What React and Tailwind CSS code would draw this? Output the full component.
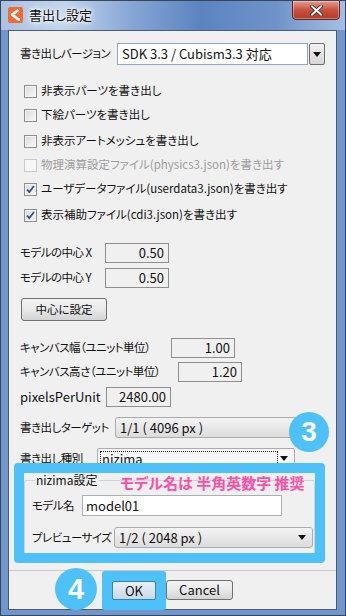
import React from "react";

const jp = "font-['Noto_Sans_CJK_JP','Noto_Sans',sans-serif] [font-feature-settings:'palt']";
const lbl = "shrink-0 whitespace-nowrap text-[11.5px] tracking-[-0.5px] text-[#111]";

function Arrow() {
  return (
    <svg width="8" height="5" viewBox="0 0 8 5">
      <path d="M0 0h8L4 5z" fill="#111" />
    </svg>
  );
}

function Check({ label, checked, disabled, extra = "" }) {
  return (
    <div className={`flex h-[24px] items-center ${extra}`}>
      <span
        className={`ml-[4px] flex h-[13px] w-[13px] shrink-0 items-center justify-center border ${
          disabled
            ? "border-[#cacaca] bg-[#f6f6f6]"
            : "border-[#8e8f8f] bg-gradient-to-br from-[#d9d9d9] to-[#fafafa] shadow-[inset_0_0_0_1px_#f4f4f4]"
        }`}
      >
        {checked ? (
          <svg width="9" height="9" viewBox="0 0 9 9">
            <path d="M1 4.5l2.3 2.6L8 1" fill="none" stroke="#3b4d7c" strokeWidth="1.8" />
          </svg>
        ) : null}
      </span>
      <span className={`ml-[4px] whitespace-nowrap text-[11.5px] ${disabled ? "text-[#9d9d9d]" : "text-[#111]"}`}>
        {label}
      </span>
    </div>
  );
}

function Num({ value, className }) {
  return (
    <div
      className={`flex h-[20px] shrink-0 items-center justify-end border border-[#8f8f8f] bg-[#f0f0f0] pr-[4px] text-[13px] text-[#111] ${className}`}
    >
      {value}
    </div>
  );
}

function Combo({ value, className }) {
  return (
    <div
      className={`flex h-[21px] shrink-0 items-center justify-between rounded-[3px] border border-[#acacac] bg-gradient-to-b from-[#f4f4f4] to-[#dcdcdc] pl-[4px] pr-[6px] text-[13px] text-[#111] ${className}`}
    >
      <span className="whitespace-pre">{value}</span>
      <Arrow />
    </div>
  );
}

export default function App() {
  return (
    <div className={`relative h-[616px] w-[346px] overflow-hidden border border-[#39465a] bg-[#7196cb] ${jp}`}>
      {/* title bar */}
      <div className="flex h-[29px] items-start bg-[linear-gradient(to_right,#a9c1e2_0%,#c3d5ec_18%,#86a6d5_38%,#5b84c0_58%,#6f93c9_80%,#a6bfe2_100%)]">
        <svg className="ml-[7px] mt-[6px]" width="15" height="16" viewBox="0 0 15 16">
          <rect width="15" height="16" rx="2" fill="#f06a35" />
          <path d="M10.5 3L4 7.6 10.5 12.5H12" fill="none" stroke="#fff" strokeWidth="2.6" strokeLinejoin="round" />
        </svg>
        <span className="ml-[6px] mt-[5px] whitespace-nowrap text-[13px] leading-[18px] text-[#111] [text-shadow:0_0_8px_#fff,0_0_5px_#fff,0_0_3px_#fff]">
          書出し設定
        </span>
        <div className="ml-auto mr-[5px] mt-[-1px] flex h-[20px] w-[48px] items-center justify-center rounded-b-[4px] border border-[#5b2a24] bg-gradient-to-b from-[#e29b8e] via-[#c9503e] to-[#b6382a] shadow-[inset_0_0_0_1px_rgba(255,255,255,0.35)]">
          <svg width="13" height="11" viewBox="0 0 13 11">
            <path d="M2 1.5l9 8M11 1.5l-9 8" stroke="#3d2522" strokeWidth="3.6" strokeLinecap="square" />
            <path d="M2 1.5l9 8M11 1.5l-9 8" stroke="#fff" strokeWidth="2" strokeLinecap="square" />
          </svg>
        </div>
      </div>

      {/* client */}
      <div className="relative ml-[7px] flex h-[580px] w-[329px] flex-col border border-[#4c5b70] bg-[#f0f0f0]">
        <div className="flex-1 pl-[11px]">
          <div className="mt-[12px] flex h-[22px] items-center">
            <span className={`w-[97px] ${lbl}`}>書き出しバージョン</span>
            <div className="flex h-[22px] w-[191px] shrink-0 items-center whitespace-nowrap border border-[#8fa6c4] bg-white pl-[4px] text-[13px] text-[#111]">
              SDK 3.3 / Cubism3.3 対応
            </div>
            <div className="ml-[1px] flex h-[22px] w-[16px] shrink-0 items-center justify-center rounded-[2px] border border-[#6f6f6f] bg-gradient-to-b from-[#f2f2f2] to-[#d6d6d6]">
              <Arrow />
            </div>
          </div>

          <div className="mt-[14px]">
            <Check label="非表示パーツを書き出し" />
            <Check label="下絵パーツを書き出し" />
            <Check label="非表示アートメッシュを書き出し" extra="mt-[2px]" />
            <Check label="物理演算設定ファイル(physics3.json)を書き出す" disabled />
            <Check label="ユーザデータファイル(userdata3.json)を書き出す" checked />
            <Check label="表示補助ファイル(cdi3.json)を書き出す" checked extra="mt-[2px]" />
          </div>

          <div className="mt-[16px] flex h-[20px] items-center">
            <span className={`w-[85px] ${lbl}`}>モデルの中心 X</span>
            <Num value="0.50" className="w-[64px]" />
          </div>
          <div className="mt-[5px] flex h-[20px] items-center">
            <span className={`w-[85px] ${lbl}`}>モデルの中心 Y</span>
            <Num value="0.50" className="w-[64px]" />
          </div>

          <button className="ml-[1px] mt-[10px] flex h-[23px] w-[86px] items-center justify-center rounded-[3px] border border-[#707070] bg-gradient-to-b from-[#f3f3f3] via-[#e9e9e9] to-[#d3d3d3] text-[11.5px] text-[#111]">
            中心に設定
          </button>

          <div className="mt-[17px] flex h-[20px] items-center">
            <span className={`w-[151px] ${lbl}`}>キャンバス幅（ユニット単位）</span>
            <Num value="1.00" className="w-[64px]" />
          </div>
          <div className="mt-[4px] flex h-[20px] items-center">
            <span className={`w-[158px] ${lbl}`}>キャンバス高さ（ユニット単位）</span>
            <Num value="1.20" className="w-[64px]" />
          </div>
          <div className="mt-[5px] flex h-[20px] items-center">
            <span className="w-[86px] shrink-0 whitespace-nowrap text-[13px] text-[#111]">pixelsPerUnit</span>
            <Num value="2480.00" className="w-[65px]" />
          </div>

          <div className="mt-[10px] flex h-[21px] items-center">
            <span className={`w-[95px] ${lbl}`}>書き出しターゲット</span>
            <Combo value="1/1 ( 4096 px )" className="w-[192px]" />
          </div>
          <div className="mt-[10px] flex h-[21px] items-center">
            <span className={`w-[77px] ${lbl}`}>書き出し種別</span>
            <div className="flex h-[21px] w-[198px] shrink-0 items-center justify-between rounded-[2px] border border-[#acacac] bg-[#f7f7f7] pl-[2px] pr-[6px]">
              <span className="flex h-[16px] w-[178px] items-center border border-dotted border-[#222] pl-[1px] text-[13px] text-[#111]">
                nizima
              </span>
              <Arrow />
            </div>
          </div>

          <fieldset className="ml-[4px] mt-[3px] w-[291px] rounded-[2px] border border-[#d3d3d3] pb-[6px] pl-[7px]">
            <legend className="ml-[3px] px-[1px] text-[12px] leading-[16px] text-[#111]">nizima設定</legend>
            <div className="mt-[7px] flex h-[21px] items-center">
              <span className={`w-[50px] ${lbl}`}>モデル名</span>
              <div className="flex h-[21px] w-[200px] shrink-0 items-center border border-[#a7afba] bg-white pl-[3px] text-[13px] text-[#111]">
                model01
              </div>
            </div>
            <div className="mt-[11px] flex h-[21px] items-center">
              <span className={`w-[82px] ${lbl}`}>プレビューサイズ</span>
              <Combo value="1/2 ( 2048 px )" className="w-[199px]" />
            </div>
          </fieldset>
        </div>

        {/* button panel */}
        <div className="flex h-[39px] items-start border-t border-[#c9c9c9] pl-[93px]">
          <div className="rounded-[3px] bg-[#4ec1f8] px-[10px] py-[10px]">
            <button className="flex h-[19px] w-[44px] items-center justify-center rounded-[2px] border border-[#3c7fb1] bg-gradient-to-b from-[#e8f1f8] to-[#c7d9e7] text-[13px] text-[#111]">
              OK
            </button>
          </div>
          <button className="mt-[9px] flex h-[20px] w-[67px] items-center justify-center rounded-[3px] border border-[#707070] bg-gradient-to-b from-[#f3f3f3] via-[#e9e9e9] to-[#d3d3d3] text-[13px] text-[#111]">
            Cancel
          </button>
        </div>

        {/* annotations */}
        <div className="pointer-events-none absolute left-[5px] top-[432px] h-[100px] w-[311px] rounded-[4px] border-[10px] border-[#4ec1f8]" />
        <div className="absolute left-[111px] top-[442px] whitespace-nowrap text-[15px] font-bold leading-[20px] text-[#ff4fa7]">
          モデル名は 半角英数字 推奨
        </div>
        <div className="absolute left-[280px] top-[381px] flex h-[40px] w-[40px] items-center justify-center rounded-full bg-[#4ec1f8] font-['Liberation_Sans',sans-serif] text-[28px] font-bold leading-none text-white">
          3
        </div>
        <div className="absolute left-[46px] top-[537px] flex h-[42px] w-[42px] items-center justify-center rounded-full bg-[#4ec1f8] font-['Liberation_Sans',sans-serif] text-[29px] font-bold leading-none text-white">
          4
        </div>
      </div>
    </div>
  );
}
